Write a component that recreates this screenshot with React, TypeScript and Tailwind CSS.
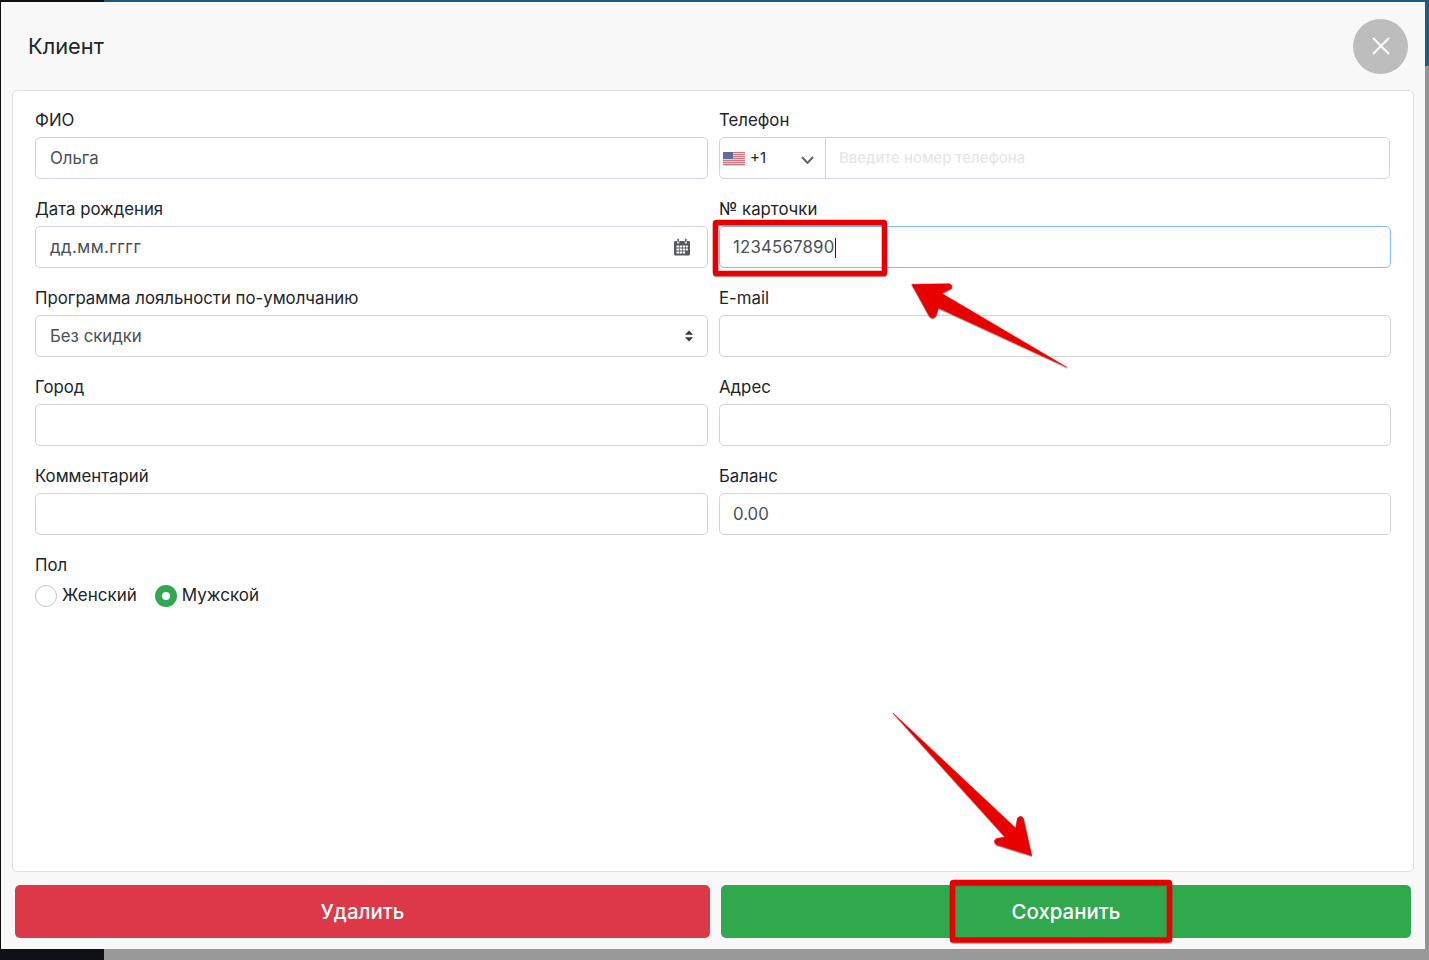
import React from "react";

const inputBox = "h-[42px] w-full rounded-[5px] border border-[#ced4da] bg-white px-[14px] pt-[2px] flex items-center text-[16.8px] text-[#495057]";
const inputBoxRight = "h-[42px] w-full rounded-[5px] border border-[#ced4da] bg-white px-[13px] pt-[2px] flex items-center text-[16.8px] text-[#495057]";

function Label({ children }: { children: React.ReactNode }) {
  return <div className="h-[24px] leading-[24px] text-[16.8px] text-[#212529] mb-[5px]">{children}</div>;
}

function Field({ label, value, right }: { label: string; value?: string; right?: boolean }) {
  return (
    <div className="h-[89px]">
      <Label>{label}</Label>
      <div className={right ? inputBoxRight : inputBox}>{value}</div>
    </div>
  );
}

function Flag() {
  return (
    <svg width="22" height="14" viewBox="0 0 22 14" className="shrink-0">
      <rect width="22" height="14" fill="#f3e6e8" />
      {[0, 2, 4, 6, 8, 10, 12].map((y) => (
        <rect key={y} y={y} width="22" height="1.200" fill="#d0757f" />
      ))}
      <rect width="10" height="7" fill="#5f6c9a" />
    </svg>
  );
}

function CalendarIcon() {
  return (
    <svg width="18" height="18" viewBox="0 0 18 18" fill="#55595e" className="-mt-[2px]">
      <path d="M1 4.500C1 3.700 1.600 3 2.400 3H4v1.200c0 .8.500 1.300 1.200 1.300s1.200-.5 1.200-1.300V3h5.200v1.200c0 .8.500 1.300 1.200 1.300S14 5 14 4.200V3h1.600c.8 0 1.400.7 1.400 1.500V16c0 .8-.6 1.500-1.400 1.500H2.400C1.600 17.500 1 16.800 1 16V4.500Z" />
      <rect x="4.500" y="0.500" width="1.400" height="4" rx="0.700" />
      <rect x="12.100" y="0.500" width="1.400" height="4" rx="0.700" />
      <g fill="#ffffff">
        <rect x="3.500" y="7.500" width="2.400" height="2" />
        <rect x="6.600" y="7.500" width="2.400" height="2" />
        <rect x="9.700" y="7.500" width="2.400" height="2" />
        <rect x="12.800" y="7.500" width="2" height="2" />
        <rect x="3.500" y="10.500" width="2.400" height="2" />
        <rect x="6.600" y="10.500" width="2.400" height="2" />
        <rect x="9.700" y="10.500" width="2.400" height="2" />
        <rect x="12.800" y="10.500" width="2" height="2" />
        <rect x="3.500" y="13.500" width="2.400" height="2" />
        <rect x="6.600" y="13.500" width="2.400" height="2" />
        <rect x="9.700" y="13.500" width="2.400" height="2" />
      </g>
    </svg>
  );
}

function Annotations() {
  return (
    <svg width="1429" height="960" viewBox="0 0 1429 960" className="absolute left-0 top-0 pointer-events-none">
      <defs>
        <filter id="sh" x="-5%" y="-5%" width="110%" height="110%">
          <feDropShadow dx="0" dy="1" stdDeviation="0.700" floodColor="#000" floodOpacity="0.350" />
        </filter>
      </defs>
      <g filter="url(#sh)">
        <rect x="715.500" y="222.500" width="169" height="51" rx="1" fill="none" stroke="#e60000" strokeWidth="5.500" />
        <rect x="952.500" y="882.500" width="217" height="57.500" rx="1" fill="none" stroke="#e60000" strokeWidth="5.500" />
        <path d="M911.700 284.300L949 283.700Q953 284.500 951.500 288.500L942 293.500L1067 367.300L938.500 308L936 316Q933 320 929.500 316.500Z" fill="#e80000" stroke="#e80000" strokeWidth="0.500" strokeLinejoin="round" />
        <path d="M893 713L1015.700 828L1017.500 818Q1021 814.500 1023.500 818.500L1031.800 855.800L997 845Q992 841.500 996.500 838.500L1005 837Z" fill="#e80000" stroke="#e80000" strokeWidth="0.500" strokeLinejoin="round" />
      </g>
    </svg>
  );
}

export default function App() {
  return (
    <div className="relative flex h-[960px] w-[1429px] flex-col overflow-hidden bg-[#999999] font-['Inter','Liberation_Sans',sans-serif]">
      <div className="flex h-[2px] shrink-0">
        <div className="w-[104px] bg-[#0e1013]" />
        <div className="flex-1 bg-[#1f5a80]" />
      </div>
      <div className="flex h-[947px] shrink-0">
        <div className="w-[1px] bg-[#0e1013]" />
        <div className="flex w-[1424px] flex-col bg-[#f8f8f8] pl-[11px] pr-[11px] shadow-[0_1px_2px_rgba(0,0,0,0.4)]">
          <div className="flex h-[88px] shrink-0 items-center justify-between pl-[16px] pr-[6px]">
            <div className="text-[21.8px] leading-[24px] text-[#212529]">Клиент</div>
            <div className="flex h-[55px] w-[55px] items-center justify-center rounded-full bg-[#bdbdbd]">
              <svg width="18" height="18" viewBox="0 0 18 18" stroke="#ffffff" strokeWidth="2" fill="none">
                <path d="M1 1L17 17M17 1L1 17" />
              </svg>
            </div>
          </div>
          <div className="h-[782px] w-[1402px] shrink-0 rounded-[5px] border border-[#dfdfdf] bg-white pl-[22px] pr-[22px] pt-[17px]">
            <div className="grid grid-cols-[673px_672px] gap-x-[11px]">
              <Field label="ФИО" value="Ольга" />
              <div className="h-[89px]">
                <Label>Телефон</Label>
                <div className="flex h-[42px] w-[671px] items-center rounded-[5px] border border-[#ced4da] bg-white">
                  <div className="flex h-full w-[106px] shrink-0 items-center border-r border-[#ced4da] pl-[3px] pr-[11px] pt-[1px] text-[15px] text-[#212529]">
                    <Flag />
                    <span className="ml-[5px] flex-1">+1</span>
                    <svg width="13" height="8" viewBox="0 0 13 8" fill="none" stroke="#666666" strokeWidth="2" className="mt-[3px]">
                      <path d="M1 1L6.500 7L12 1" />
                    </svg>
                  </div>
                  <span className="pl-[13px] pt-[1px] text-[15px] text-[#e4e4e4]">Введите номер телефона</span>
                </div>
              </div>
              <div className="h-[89px]">
                <Label>Дата рождения</Label>
                <div className={inputBox + " justify-between pr-[16px]"}>
                  <span className="tracking-[0.45px]">дд.мм.гггг</span>
                  <CalendarIcon />
                </div>
              </div>
              <div className="h-[89px]">
                <Label>№ карточки</Label>
                <div className="flex h-[42px] w-full items-center rounded-[5px] border border-[#80bdff] bg-white px-[13px] pt-[1px] text-[16.8px] tracking-[0.2px] text-[#495057]">
                  1234567890<span className="h-[20px] w-[1px] bg-[#222222]" />
                </div>
              </div>
              <div className="h-[89px]">
                <Label>Программа лояльности по-умолчанию</Label>
                <div className={inputBox + " justify-between pr-[13px]"}>
                  <span>Без скидки</span>
                  <svg width="10" height="12" viewBox="0 0 10 12" fill="#343a40" className="-mt-[2px]">
                    <path d="M5 0.500L9 4.700H1Z" />
                    <path d="M5 11.500L1 7.300H9Z" />
                  </svg>
                </div>
              </div>
              <Field label="E-mail" right />
              <Field label="Город" />
              <Field label="Адрес" right />
              <Field label="Комментарий" />
              <Field label="Баланс" value="0.00" right />
            </div>
            <Label>Пол</Label>
            <div className="mt-[1px] flex items-center text-[17px] leading-[24px] text-[#212529]">
              <span className="mr-[5px] mt-[3px] h-[22px] w-[22px] rounded-full border border-[#bfc5cc] bg-white" />
              <span className="mr-[18px]">Женский</span>
              <span className="mr-[5px] mt-[3px] flex h-[22px] w-[22px] items-center justify-center rounded-full bg-[#2fa84f]">
                <span className="h-[8px] w-[8px] rounded-full bg-white" />
              </span>
              <span>Мужской</span>
            </div>
          </div>
          <div className="mt-[13px] flex h-[53px] shrink-0 gap-[11px] pl-[3px] pr-[3px]">
            <div className="flex w-[695px] items-center justify-center rounded-[5px] bg-[#dc3848] pt-[2px] text-[20.4px] font-medium text-white">Удалить</div>
            <div className="flex w-[690px] items-center justify-center rounded-[5px] bg-[#30a84e] pt-[2px] text-[20.4px] font-medium text-white">Сохранить</div>
          </div>
        </div>
        <div className="flex w-[4px] flex-col">
          <div className="h-[64px] bg-[#1f5a80]" />
          <div className="flex-1 bg-[#949494]" />
        </div>
      </div>
      <div className="flex h-[11px] shrink-0">
        <div className="w-[104px] bg-[#0e1013]" />
        <div className="flex-1 bg-[#999999]" />
      </div>
      <Annotations />
    </div>
  );
}
